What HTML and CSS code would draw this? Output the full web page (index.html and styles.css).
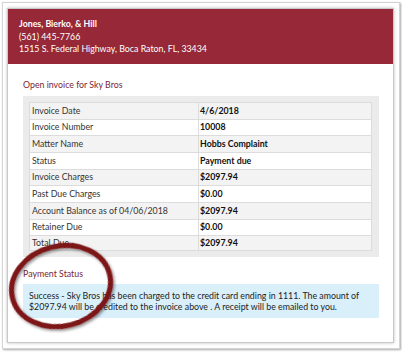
FILE: index.html
```html
<!DOCTYPE html>
<html>
<head>
<meta charset="utf-8">
<link rel="stylesheet" href="styles.css">
</head>
<body>
<div class="frame">
  <div class="card">
    <header class="firm">
      <div class="firm-name">Jones, Bierko, &amp; Hill</div>
      <div>(561) 445-7766</div>
      <div>1515 S. Federal Highway, Boca Raton, FL, 33434</div>
    </header>
    <div class="content">
      <h2 class="title">Open invoice for Sky Bros</h2>
      <div class="table-box">
        <table class="inv">
          <tr><td>Invoice Date</td><td>4/6/2018</td></tr>
          <tr><td>Invoice Number</td><td>10008</td></tr>
          <tr><td>Matter Name</td><td>Hobbs Complaint</td></tr>
          <tr><td>Status</td><td>Payment due</td></tr>
          <tr><td>Invoice Charges</td><td>$2097.94</td></tr>
          <tr><td>Past Due Charges</td><td>$0.00</td></tr>
          <tr><td>Account Balance as of 04/06/2018</td><td>$2097.94</td></tr>
          <tr><td>Retainer Due</td><td>$0.00</td></tr>
          <tr><td>Total Due</td><td>$2097.94</td></tr>
        </table>
      </div>
      <h2 class="title status-title">Payment Status</h2>
      <div class="alert">Success - Sky Bros has been charged to the credit card ending in 1111. The amount of $2097.94 will be credited to the invoice above . A receipt will be emailed to you.</div>
    </div>
    <svg class="circle" width="130" height="110" viewBox="0 0 130 110">
      <defs>
        <filter id="sh" x="-20%" y="-20%" width="140%" height="140%">
          <feDropShadow dx="1" dy="2" stdDeviation="1.5" flood-color="#000" flood-opacity="0.45"/>
        </filter>
      </defs>
      <ellipse cx="58" cy="52" rx="50" ry="40" transform="rotate(-14 58 52)" fill="none" stroke="#7d1216" stroke-width="5" filter="url(#sh)"/>
    </svg>
  </div>
</div>
</body>
</html>
```
FILE: styles.css
```css
* { box-sizing: border-box; }
html, body { margin: 0; padding: 0; background: #fff; }
body { font-family: Lato, "Open Sans", sans-serif; width: 402px; height: 352px; overflow: hidden; }
.frame {
  margin: 2px 0 0 2px;
  width: 398px;
  height: 347px;
  border: 1px solid #d4d4d4;
  box-shadow: 1px 1px 2px rgba(0,0,0,0.35);
  padding: 5px 5px 5px 4px;
  background: #fff;
}
.card {
  position: relative;
  height: 100%;
  border: 1px solid #c8c8c8;
  box-shadow: 0 0 3px rgba(0,0,0,0.25);
  background: #fff;
}
.firm {
  background: #962838;
  color: #fff;
  height: 55px;
  padding: 9px 11px 0;
  font-size: 8.8px;
  line-height: 12.5px;
}
.firm-name { font-weight: bold; }
.content { padding: 0 14px 0 15px; }
.title {
  margin: 0;
  font-size: 8.8px;
  font-weight: normal;
  color: #7a1e34;
  line-height: 14px;
  padding-top: 14px;
  height: 32px;
}
.table-box {
  background: #ebebeb;
  padding: 6px 7px 6px 6px;
}
.inv {
  width: 100%;
  border-collapse: collapse;
  font-size: 8.8px;
  color: #333;
}
.inv td {
  height: 16.66px;
  padding: 0 2px;
  border: 1px solid #dcdcdc;
  line-height: 14px;
}
.inv tr:nth-child(odd) td { background: #f3f3f3; }
.inv tr:nth-child(even) td { background: #fff; }
.inv td:first-child { width: 169px; }
.inv td:last-child { font-weight: bold; color: #111; padding-left: 1px; }
.inv tr:last-child td { height: 14.5px; vertical-align: top; }
.status-title { padding-top: 10px; height: 27px; }
.alert {
  background: #d9f0fb;
  color: #222;
  font-size: 8.8px;
  line-height: 11px;
  padding: 6px 6px 6px 6px;
  height: 34px;
}
.circle { position: absolute; left: -5px; top: 225px; overflow: visible; }
```
